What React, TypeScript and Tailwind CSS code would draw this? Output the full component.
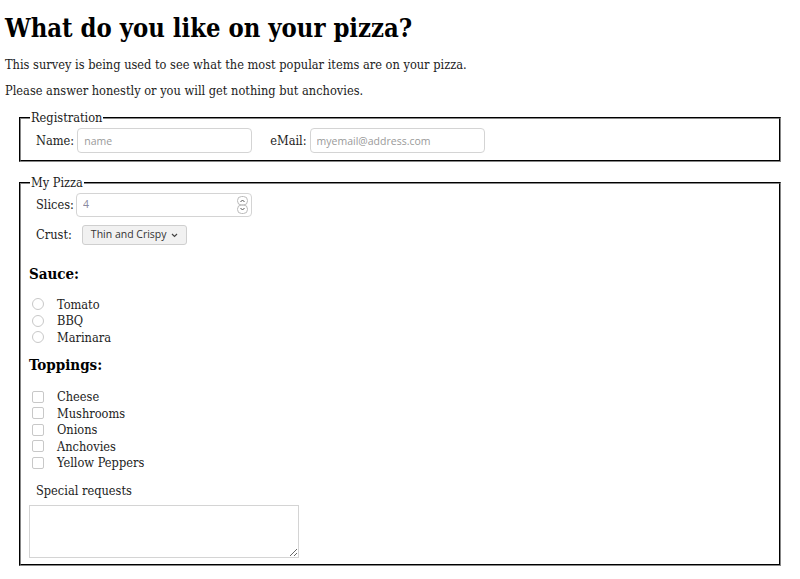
const SAUCES = ["Tomato", "BBQ", "Marinara"];
const TOPPINGS = ["Cheese", "Mushrooms", "Onions", "Anchovies", "Yellow Peppers"];

const serif = "font-['DejaVu_Serif_Condensed','DejaVu_Serif',serif] font-stretch-condensed";
const sans = "font-['Open_Sans',sans-serif] font-stretch-normal";

function TextBox({ placeholder, width }: { placeholder: string; width: string }) {
  return (
    <input
      type="text"
      placeholder={placeholder}
      className={`${sans} ${width} h-[25px] rounded-[4px] border border-[#d4d4d4] bg-white px-[6px] text-[10.5px] text-[#333] outline-none placeholder:text-[#9a9a9a]`}
    />
  );
}

export default function App() {
  return (
    <div className={`${serif} min-h-[579px] bg-white px-[5px] pt-[12px] text-[12.7px] text-[#222]`}>
      <h1 className="text-[25.4px] font-bold leading-[32px] text-black">
        What do you like on your pizza?
      </h1>
      <p className="mt-[13px] leading-[16px]">
        This survey is being used to see what the most popular items are on your pizza.
      </p>
      <p className="mt-[10px] leading-[16px]">
        Please answer honestly or you will get nothing but anchovies.
      </p>

      <form className="mt-[12px] px-[14px]">
        {/* Registration */}
        <fieldset className="border-2 border-[#333] [border-style:groove] px-[15px] pb-[7px]">
          <legend className="ml-[-6px] px-[1px] leading-[14px]">Registration</legend>
          <div className="mt-[3px] flex items-center">
            <label className="mr-[3px]">Name:</label>
            <TextBox placeholder="name" width="w-[175px]" />
            <label className="ml-[18px] mr-[3px]">eMail:</label>
            <TextBox placeholder="myemail@address.com" width="w-[175px]" />
          </div>
        </fieldset>

        {/* My Pizza */}
        <fieldset className="mt-[14px] border-2 border-[#333] [border-style:groove] px-[8px] pb-[6px]">
          <legend className="ml-[1px] px-[1px] leading-[14px]">My Pizza</legend>

          <div className="ml-[7px] mt-[3px] flex items-center">
            <label className="mr-[2px]">Slices:</label>
            <div className="flex h-[24px] w-[176px] items-center rounded-[4px] border border-[#d4d4d4] bg-white pl-[6px] pr-[3px]">
              <input
                type="text"
                placeholder="4"
                className={`${sans} w-full min-w-0 text-[10.5px] outline-none placeholder:text-[#8a8aa0]`}
              />
              <svg width="11" height="18" viewBox="0 0 11 18" className="shrink-0">
                <rect x="0.5" y="0.5" width="10" height="8.5" rx="4" fill="none" stroke="#bbb" />
                <rect x="0.5" y="9" width="10" height="8.5" rx="4" fill="none" stroke="#bbb" />
                <path d="M3.5 6 L5.5 4 L7.5 6" fill="none" stroke="#555" strokeWidth="1" />
                <path d="M3.5 12 L5.5 14 L7.5 12" fill="none" stroke="#555" strokeWidth="1" />
              </svg>
            </div>
          </div>

          <div className="ml-[7px] mt-[8px] flex items-center">
            <label className="mr-[10px]">Crust:</label>
            <button
              type="button"
              className={`${sans} flex h-[20px] items-center gap-[4px] rounded-[3px] border border-[#cfcfcf] bg-[#f1f1f1] px-[8px] text-[10.5px] text-[#333]`}
            >
              Thin and Crispy
              <svg width="7" height="5" viewBox="0 0 7 5">
                <path d="M1 1 L3.5 3.5 L6 1" fill="none" stroke="#444" strokeWidth="1.2" />
              </svg>
            </button>
          </div>

          <h3 className="mt-[20px] text-[15px] font-bold leading-[18px] text-black">Sauce:</h3>
          <div className="mt-[13px] flex flex-col">
            {SAUCES.map((s) => (
              <label key={s} className="flex h-[16.5px] items-center">
                <span className="ml-[3px] h-[12px] w-[12px] rounded-full border border-[#c8c8c8] bg-white" />
                <span className="ml-[13px]">{s}</span>
              </label>
            ))}
          </div>

          <h3 className="mt-[10px] text-[15px] font-bold leading-[18px] text-black">Toppings:</h3>
          <div className="mt-[15px] flex flex-col">
            {TOPPINGS.map((t) => (
              <label key={t} className="flex h-[16.5px] items-center">
                <span className="ml-[3px] h-[12px] w-[12px] rounded-[2px] border border-[#c8c8c8] bg-white" />
                <span className="ml-[13px]">{t}</span>
              </label>
            ))}
          </div>

          <div className="ml-[7px] mt-[12px] leading-[16px]">Special requests</div>
          <textarea className="mt-[6px] block h-[53px] w-[270px] border border-[#d4d4d4] outline-none" />
        </fieldset>
      </form>
    </div>
  );
}
